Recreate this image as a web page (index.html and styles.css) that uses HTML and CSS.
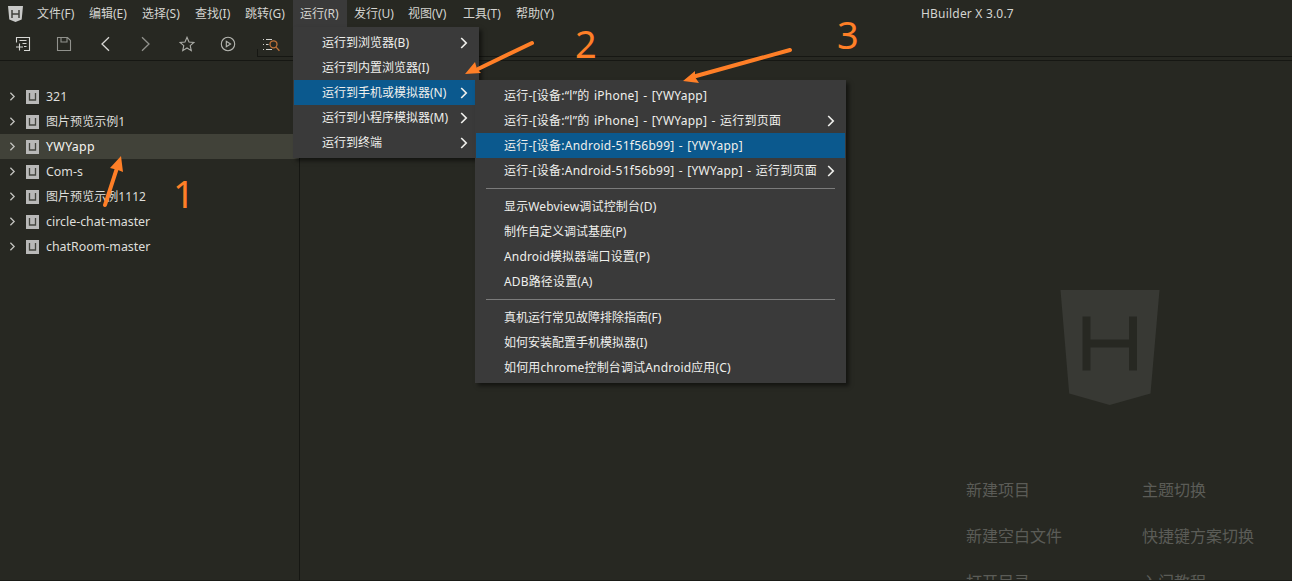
FILE: index.html
```html
<!DOCTYPE html>
<html lang="zh-CN">
<head>
<meta charset="utf-8">
<title>HBuilder X 3.0.7</title>
<link rel="stylesheet" href="styles.css">
</head>
<body>
<svg class="defs" width="0" height="0" aria-hidden="true">
  <symbol id="chev" viewBox="0 0 8 12"><path d="M1.2 1 6.2 6 1.2 11" fill="none" stroke="currentColor" stroke-width="1.7"/></symbol>
  <symbol id="proj" viewBox="0 0 13 14"><path d="M0 0h13v14H0z" fill="#b9b9b8"/><path d="M3.500 3v7h6V3" fill="none" stroke="#44453f" stroke-width="1.3"/></symbol>
</svg>
<div class="app">
  <header class="titlebar">
    <svg class="logo" width="16" height="17" viewBox="0 0 16 17"><path d="M0 0h15l-1.3 13.6-6.2 2.4-6.2-2.4z" fill="#c9c9c8"/><path d="M4 4v8M11 4v8M4 8h7" stroke="#41423d" stroke-width="1.5" fill="none"/></svg>
    <nav class="menubar">
      <span>文件(F)</span><span>编辑(E)</span><span>选择(S)</span><span>查找(I)</span><span>跳转(G)</span><span class="open">运行(R)</span><span>发行(U)</span><span>视图(V)</span><span>工具(T)</span><span>帮助(Y)</span>
    </nav>
    <div class="title">HBuilder X 3.0.7</div>
  </header>
  <div class="toolbar">
    <svg width="16" height="16" viewBox="0 0 16 16" fill="none" stroke="#d8d8d5" stroke-width="1.1"><path d="M1.5 6.5v-5h13v13H9M4.5 4.5h7M7.500 7.500h4M9 10.500h2.500M4.500 7.500v7M1 11h7"/></svg>
    <svg width="16" height="16" viewBox="0 0 16 16" fill="none" stroke="#91928d" stroke-width="1.100"><path d="M1.500 1.500h10l3 3v10h-13zM5 1.500v4.500h6v-4.500"/></svg>
    <svg width="16" height="16" viewBox="0 0 16 16" fill="none" stroke="#d8d8d5" stroke-width="1.300"><path d="M12 1.200 5 8l7 6.800"/></svg>
    <svg width="16" height="16" viewBox="0 0 16 16" fill="none" stroke="#91928d" stroke-width="1.300"><path d="M4 1.200 11 8l-7 6.800"/></svg>
    <svg width="16" height="16" viewBox="0 0 16 16" fill="none" stroke="#acada8" stroke-width="1.100"><path d="m8 1.300 2 4.700 4.900.4-3.700 3.300 1.100 4.900L8 12l-4.300 2.600 1.100-4.900L1.100 6.400 6 6z"/></svg>
    <svg width="16" height="16" viewBox="0 0 16 16" fill="none" stroke="#b5b6b1" stroke-width="1.100"><circle cx="8" cy="8" r="6.700"/><path d="M6.300 5.200v5.600L10.600 8z"/></svg>
    <svg width="19" height="16" viewBox="0 0 19 16" fill="none" stroke="#d0d0cc"><path d="M2 3.500h1M5 3.500h6M2 8.500h1M5 8.500h2.500M2 13.500h1M5 13.500h6"/><g stroke="#bd7038" stroke-width="1.300"><circle cx="12.500" cy="8.300" r="3.500"/><path d="m14.900 10.900 3.500 3.800"/></g></svg>
    <div class="field"></div>
  </div>
  <main class="workspace">
    <aside class="tree">
      <div class="row"><svg class="tw"><use href="#chev"/></svg><svg class="pj"><use href="#proj"/></svg><span>321</span></div>
      <div class="row"><svg class="tw"><use href="#chev"/></svg><svg class="pj"><use href="#proj"/></svg><span class="zh">图片预览示例1</span></div>
      <div class="row selected"><svg class="tw"><use href="#chev"/></svg><svg class="pj"><use href="#proj"/></svg><span>YWYapp</span></div>
      <div class="row"><svg class="tw"><use href="#chev"/></svg><svg class="pj"><use href="#proj"/></svg><span>Com-s</span></div>
      <div class="row"><svg class="tw"><use href="#chev"/></svg><svg class="pj"><use href="#proj"/></svg><span class="zh">图片预览示例1112</span></div>
      <div class="row"><svg class="tw"><use href="#chev"/></svg><svg class="pj"><use href="#proj"/></svg><span>circle-chat-master</span></div>
      <div class="row"><svg class="tw"><use href="#chev"/></svg><svg class="pj"><use href="#proj"/></svg><span>chatRoom-master</span></div>
    </aside>
    <section class="welcome">
      <svg class="mark" width="100" height="116" viewBox="0 0 100 116"><path fill="#383934" d="M.5 0h99l-9 103.500L49.700 115 9.200 103.500z"/><path d="M26.500 26.500v54M73 26.500v54M26.500 53.500H73" stroke="#272822" stroke-width="8"/></svg>
      <div class="links">
        <span>新建项目</span><span>主题切换</span>
        <span>新建空白文件</span><span>快捷键方案切换</span>
        <span>打开目录</span><span>入门教程</span>
      </div>
    </section>
  </main>
</div>

<div class="menu run-menu">
  <div class="item"><span>运行到浏览器(B)</span><svg><use href="#chev"/></svg></div>
  <div class="item"><span>运行到内置浏览器(I)</span></div>
  <div class="item active"><span>运行到手机或模拟器(N)</span><svg><use href="#chev"/></svg></div>
  <div class="item"><span>运行到小程序模拟器(M)</span><svg><use href="#chev"/></svg></div>
  <div class="item"><span>运行到终端</span><svg><use href="#chev"/></svg></div>
</div>
<div class="menu device-menu">
  <div class="item device"><span>运行-[设备:<q>l</q>的 iPhone] - [YWYapp]</span></div>
  <div class="item device"><span>运行-[设备:<q>l</q>的 iPhone] - [YWYapp] - 运行到页面</span><svg><use href="#chev"/></svg></div>
  <div class="item device active"><span>运行-[设备:Android-51f56b99] - [YWYapp]</span></div>
  <div class="item device"><span>运行-[设备:Android-51f56b99] - [YWYapp] - 运行到页面</span><svg><use href="#chev"/></svg></div>
  <div class="sep"></div>
  <div class="item mixed"><span>显示Webview调试控制台(D)</span></div>
  <div class="item"><span>制作自定义调试基座(P)</span></div>
  <div class="item mixed"><span>Android模拟器端口设置(P)</span></div>
  <div class="item mixed"><span>ADB路径设置(A)</span></div>
  <div class="sep"></div>
  <div class="item"><span>真机运行常见故障排除指南(F)</span></div>
  <div class="item"><span>如何安装配置手机模拟器(I)</span></div>
  <div class="item mixed"><span>如何用chrome控制台调试Android应用(C)</span></div>
</div>

<svg class="arrows" width="1292" height="581" viewBox="0 0 1292 581">
  <g stroke="#ff7f27" stroke-width="4" stroke-linecap="round"><path d="M105 205 117 168M532 43 478 69M790 50 696 76"/></g>
  <g fill="#ff7f27"><path d="m121 156 2 16-5-2-8-2zM465 74l10-12 2 7 4 4zM683 81l12-10v6l4 6z"/></g>
</svg>
<span class="step s1">1</span><span class="step s2">2</span><span class="step s3">3</span>
</body>
</html>
```
FILE: styles.css
```css
* { box-sizing: border-box; }
body {
  margin: 0;
  width: 1292px;
  height: 581px;
  overflow: hidden;
  position: relative;
  background: #272822;
  color: #d4d4d0;
  font: 12px/25px "Noto Sans", "Noto Sans CJK SC", sans-serif;
  white-space: nowrap;
}
svg { display: block; flex: none; }
.defs { position: absolute; }
.app {
  display: flex;
  flex-direction: column;
  height: 581px;
  border-bottom: 1px solid #1a1b17;
}
.titlebar { display: flex; height: 27px; line-height: 27px; }
.logo { margin: 6px 6px 0 8px; }
.menubar {
  display: grid;
  grid-template-columns: 52px 53px 53px 50px 55px 54px 54px 55px 53px 53px;
}
.menubar span { padding-left: 7px; }
.menubar .open { background: #3a3a3a; }
.title { margin-left: 359px; letter-spacing: .2px; }
.toolbar {
  display: flex;
  height: 34px;
  padding: 9px 0 0 15px;
  gap: 25px;
  border-bottom: 1px solid #161713;
}
.toolbar .field {
  flex: 1;
  height: 8px;
  margin: 13px 0 0 -48px;
  border-bottom: 1px solid #161713;
  border-left: 1px solid #161713;
}
.workspace { display: flex; flex: 1; min-height: 0; }
.tree {
  width: 300px;
  padding-top: 23px;
  border-right: 1px solid #161713;
  color: #dededa;
  font-size: 12.4px;
}
.tree .zh { font-size: 12px; letter-spacing: .05px; }
.row { display: flex; align-items: center; height: 25px; padding-left: 9px; }
.row.selected { background: #414239; color: #f4f4f0; letter-spacing: .3px; }
.tw { width: 7px; height: 9px; margin-right: 10px; color: #c4c4c0; }
.pj { width: 13px; height: 14px; margin-right: 7px; }
.welcome { flex: 1; padding: 229px 0 0 665px; overflow: hidden; }
.mark { margin-left: 95px; }
.links {
  display: grid;
  grid-template-columns: 177px 150px;
  grid-auto-rows: 46px;
  margin-top: 61px;
  line-height: 46px;
  font-size: 16px;
  color: #5b5c57;
}
.links span:nth-child(odd) { padding-left: 1px; }
.menu {
  position: absolute;
  background: #3a3a3a;
  color: #efefec;
  box-shadow: 3px 3px 4px rgba(0, 0, 0, .5);
}
.item { display: flex; align-items: center; justify-content: space-between; height: 25px; padding: 0 10px 0 28px; }
.item svg { width: 8px; height: 12px; }
.item.active { background: #0b598e; }
.device { letter-spacing: .25px; word-spacing: 1px; }
.mixed { letter-spacing: .15px; }
q { quotes: none; }
q::before { content: "\201c"; }
q::after { content: "\201d"; }
.run-menu { left: 293px; top: 27px; width: 186px; height: 131px; padding: 3px 4px 0 1px; }
.run-menu .item { padding-right: 7px; }
.device-menu { left: 475px; top: 80px; width: 371px; height: 303px; padding: 3px 1px 0; }
.sep { height: 1px; margin: 5px 10px; background: #7b7b7b; }
.arrows { position: absolute; left: 0; top: 0; }
.step { position: absolute; color: #ff7f27; font-size: 38px; line-height: 44px; }
.s1 { left: 173px; top: 171px; }
.s2 { left: 575px; top: 21px; }
.s3 { left: 837px; top: 12px; }
```
